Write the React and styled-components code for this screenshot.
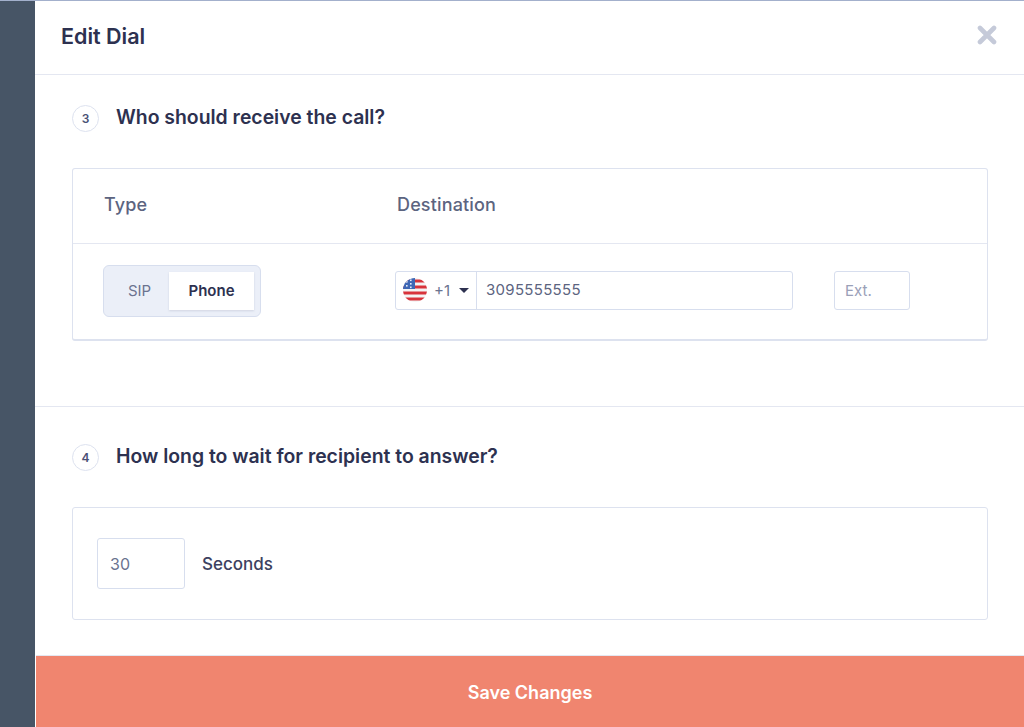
import React from 'react';
import styled, { createGlobalStyle } from 'styled-components';

const GlobalStyle = createGlobalStyle`
  html, body {
    margin: 0;
    padding: 0;
    height: 100%;
    overflow: hidden;
    background: #fff;
    font-family: Inter, "Liberation Sans", sans-serif;
  }
`;

function UsFlag() {
  return (
    <FlagIcon viewBox="0 0 24 24">
      <defs>
        <clipPath id="flagCircle">
          <circle cx="12" cy="12" r="12" />
        </clipPath>
      </defs>
      <g clipPath="url(#flagCircle)">
        <rect width="24" height="24" fill="#f4f4f4" />
        <rect y="1.5" width="24" height="3" fill="#d8343c" />
        <rect y="7.5" width="24" height="3" fill="#d8343c" />
        <rect y="13.5" width="24" height="3" fill="#d8343c" />
        <rect y="19.5" width="24" height="3" fill="#d8343c" />
        <rect width="12" height="11" fill="#3f67b5" />
        <rect x="3" y="3" width="1.6" height="1.6" fill="#e6ebf5" />
        <rect x="7" y="1.5" width="1.6" height="1.6" fill="#e6ebf5" />
        <rect x="7" y="5" width="1.6" height="1.6" fill="#e6ebf5" />
        <rect x="3" y="7" width="1.6" height="1.6" fill="#e6ebf5" />
        <rect x="7" y="8.5" width="1.6" height="1.6" fill="#e6ebf5" />
      </g>
    </FlagIcon>
  );
}

function App() {
  return (
    <>
      <GlobalStyle />
      <Page>
        <Sidebar />
        <Modal>
          <Header>
            <HeaderTitle>Edit Dial</HeaderTitle>
            <CloseButton aria-label="Close">
              <svg width="20" height="20" viewBox="0 0 20 20">
                <path d="M3 3 L17 17 M17 3 L3 17" stroke="#c5cad9" strokeWidth="4.6" strokeLinecap="round" />
              </svg>
            </CloseButton>
          </Header>

          <Body>
            <RecipientSection>
              <StepHeading>
                <StepNumber>3</StepNumber>
                <StepTitle>Who should receive the call?</StepTitle>
              </StepHeading>
              <Card>
                <CardHead>
                  <TypeColumn $width={293}>
                    <ColumnLabel>Type</ColumnLabel>
                  </TypeColumn>
                  <ColumnLabel>Destination</ColumnLabel>
                </CardHead>
                <CardRow>
                  <TypeColumn $width={292}>
                    <Toggle>
                      <ToggleOption>SIP</ToggleOption>
                      <ToggleOption $active>Phone</ToggleOption>
                    </Toggle>
                  </TypeColumn>
                  <PhoneField>
                    <CountryPicker>
                      <UsFlag />
                      <DialCode>+1</DialCode>
                      <Caret />
                    </CountryPicker>
                    <PhoneInput readOnly value="3095555555" />
                  </PhoneField>
                  <ExtInput readOnly placeholder="Ext." />
                </CardRow>
              </Card>
            </RecipientSection>

            <WaitSection>
              <StepHeading>
                <StepNumber>4</StepNumber>
                <StepTitle>How long to wait for recipient to answer?</StepTitle>
              </StepHeading>
              <WaitCard>
                <SecondsInput readOnly value="30" />
                <SecondsLabel>Seconds</SecondsLabel>
              </WaitCard>
            </WaitSection>
          </Body>

          <SaveButton>Save Changes</SaveButton>
        </Modal>
      </Page>
    </>
  );
}

const Page = styled.div`
  display: flex;
  width: 1024px;
  height: 727px;
`;

const Sidebar = styled.div`
  width: 35px;
  flex-shrink: 0;
  background-color: #475566;
  border-top: 1px solid #a3b0cc;
  box-sizing: border-box;
`;

const Modal = styled.div`
  flex: 1;
  display: flex;
  flex-direction: column;
  min-width: 0;
  border-top: 1px solid #a3b0cc;
  box-sizing: border-box;
`;

const Header = styled.div`
  height: 74px;
  flex-shrink: 0;
  box-sizing: border-box;
  display: flex;
  align-items: center;
  justify-content: space-between;
  padding: 0 27px 5px 26px;
  border-bottom: 1px solid #e4e7f1;
`;

const HeaderTitle = styled.div`
  font-size: 21.5px;
  font-weight: 600;
  color: #2d3150;
  padding-top: 2px;
`;

const CloseButton = styled.button`
  display: flex;
  padding: 0;
  border: none;
  background: none;
`;

const Body = styled.div`
  flex: 1;
  display: flex;
  flex-direction: column;
  min-height: 0;
`;

const RecipientSection = styled.div`
  height: 332px;
  flex-shrink: 0;
  box-sizing: border-box;
  padding: 29px 36px 0 37px;
  border-bottom: 1px solid #e4e7f1;
`;

const WaitSection = styled.div`
  flex: 1;
  box-sizing: border-box;
  padding: 36px 36px 0 37px;
`;

const StepHeading = styled.div`
  display: flex;
  align-items: center;
  gap: 17px;
  height: 28px;
`;

const StepNumber = styled.div`
  width: 27px;
  height: 27px;
  box-sizing: border-box;
  border: 1px solid #dde2ef;
  border-radius: 50%;
  display: flex;
  align-items: center;
  justify-content: center;
  font-size: 12px;
  font-weight: 600;
  color: #4a5175;
  margin-top: 1px;
`;

const StepTitle = styled.div`
  font-size: 19.4px;
  font-weight: 600;
  color: #2d3150;
  margin-top: -2px;
`;

const Card = styled.div`
  margin-top: 36px;
  height: 173px;
  box-sizing: border-box;
  border: 1px solid #dde2ef;
  border-bottom-width: 2px;
  border-radius: 3px;
`;

const CardHead = styled.div`
  height: 75px;
  box-sizing: border-box;
  display: flex;
  align-items: center;
  padding: 0 0 4px 31px;
  border-bottom: 1px solid #e4e7f1;
`;

const CardRow = styled.div`
  height: 95px;
  box-sizing: border-box;
  display: flex;
  align-items: center;
  padding: 0 0 0 30px;
`;

const TypeColumn = styled.div`
  width: ${(props) => props.$width}px;
  flex-shrink: 0;
`;

const ColumnLabel = styled.div`
  font-size: 18px;
  font-weight: 500;
  color: #5c6480;
  letter-spacing: 0.15px;
`;

const Toggle = styled.div`
  display: flex;
  width: 158px;
  height: 52px;
  box-sizing: border-box;
  padding: 6px;
  margin-top: -2px;
  background-color: #ebeff8;
  border: 1px solid #d7deee;
  border-radius: 6px;
`;

const ToggleOption = styled.div`
  display: flex;
  align-items: center;
  justify-content: center;
  font-size: 15px;
  font-weight: ${(props) => (props.$active ? 600 : 400)};
  color: ${(props) => (props.$active ? '#2d3150' : '#6b7390')};
  background-color: ${(props) => (props.$active ? '#fff' : 'transparent')};
  box-shadow: ${(props) => (props.$active ? '0 1px 2px rgba(60, 70, 110, 0.15)' : 'none')};
  width: ${(props) => (props.$active ? '85px' : '59px')};
`;

const PhoneField = styled.div`
  display: flex;
  width: 398px;
  height: 39px;
  box-sizing: border-box;
  border: 1px solid #d7deee;
  border-radius: 3px;
  margin-top: -3px;
`;

const CountryPicker = styled.div`
  display: flex;
  align-items: center;
  width: 81px;
  flex-shrink: 0;
  box-sizing: border-box;
  padding-left: 7px;
  border-right: 1px solid #d7deee;
`;

const FlagIcon = styled.svg`
  width: 24px;
  height: 24px;
  flex-shrink: 0;
`;

const DialCode = styled.span`
  font-size: 15px;
  color: #6b7390;
  margin-left: 7px;
`;

const Caret = styled.span`
  width: 0;
  height: 0;
  margin-left: 9px;
  border-left: 5px solid transparent;
  border-right: 5px solid transparent;
  border-top: 5px solid #2d3150;
`;

const PhoneInput = styled.input`
  flex: 1;
  min-width: 0;
  border: none;
  outline: none;
  background: none;
  padding: 0 9px 2px;
  font-family: inherit;
  font-size: 15px;
  color: #5c6480;
  letter-spacing: 0.3px;
`;

const ExtInput = styled.input`
  width: 76px;
  height: 39px;
  box-sizing: border-box;
  margin-left: 41px;
  margin-top: -3px;
  padding: 0 10px;
  border: 1px solid #d7deee;
  border-radius: 3px;
  outline: none;
  font-family: inherit;
  font-size: 15px;

  &::placeholder {
    color: #9aa0b8;
    opacity: 1;
  }
`;

const WaitCard = styled.div`
  margin-top: 36px;
  height: 113px;
  box-sizing: border-box;
  display: flex;
  align-items: center;
  padding-left: 24px;
  border: 1px solid #dde2ef;
  border-radius: 3px;
`;

const SecondsInput = styled.input`
  width: 88px;
  height: 51px;
  box-sizing: border-box;
  padding: 0 12px;
  border: 1px solid #d7deee;
  border-radius: 3px;
  outline: none;
  font-family: inherit;
  font-size: 16px;
  color: #6b7390;
`;

const SecondsLabel = styled.span`
  margin-left: 17px;
  font-size: 17px;
  font-weight: 500;
  color: #3c4160;
`;

const SaveButton = styled.button`
  height: 72px;
  flex-shrink: 0;
  margin-left: 1px;
  padding-top: 2px;
  border: none;
  border-top: 1px solid #e4e7f1;
  background-color: #f0856f;
  color: #fff;
  font-family: inherit;
  font-size: 18px;
  font-weight: 600;
`;

export default App;
